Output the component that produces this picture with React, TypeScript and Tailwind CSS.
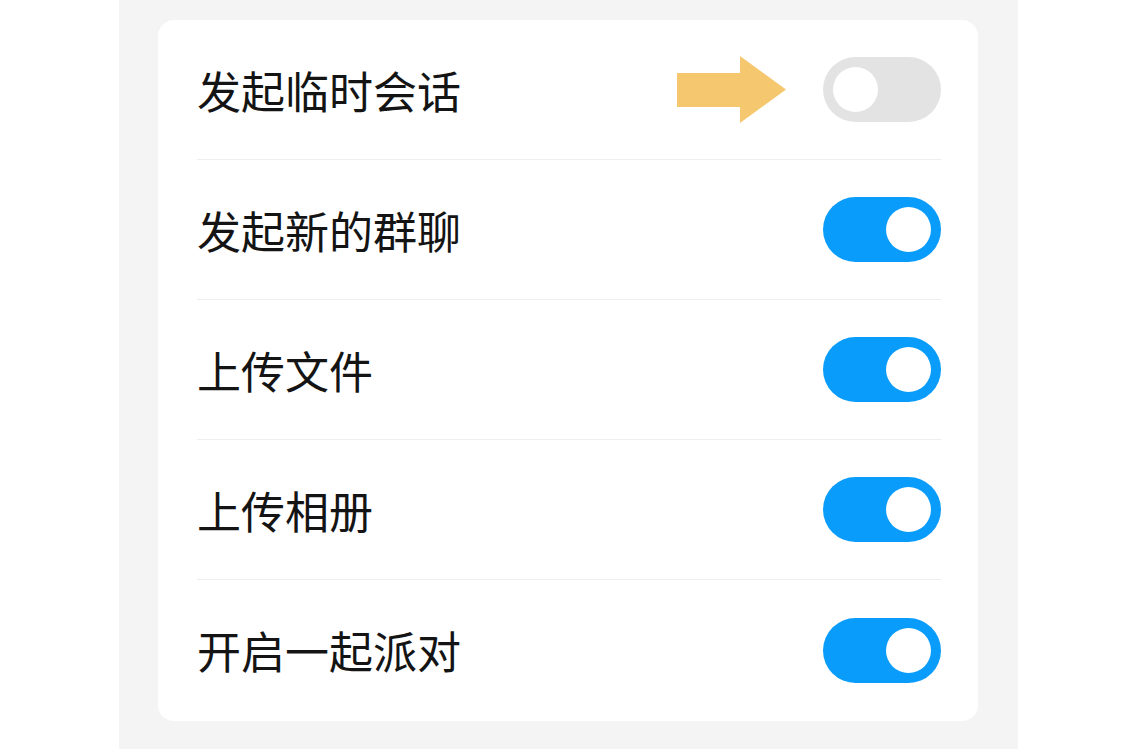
import { useState } from "react";

const ITEMS = [
  { label: "发起临时会话", on: false, arrow: true },
  { label: "发起新的群聊", on: true },
  { label: "上传文件", on: true },
  { label: "上传相册", on: true },
  { label: "开启一起派对", on: true },
];

function Toggle({ on, onClick }: { on: boolean; onClick: () => void }) {
  return (
    <button
      onClick={onClick}
      className={`w-[118px] h-[65px] rounded-full flex items-center px-[10px] ${
        on ? "bg-[#0a9cfa] justify-end" : "bg-[#e3e3e3] justify-start"
      }`}
    >
      <span className="w-[45px] h-[45px] rounded-full bg-white block" />
    </button>
  );
}

function Arrow() {
  return (
    <svg width="110" height="67" viewBox="0 0 110 67" className="mr-[36px]">
      <polygon points="0,17 63,17 63,0 109,33.5 63,67 63,51 0,51" fill="#f5c86f" />
    </svg>
  );
}

export default function App() {
  const [items, setItems] = useState(ITEMS);

  const flip = (i: number) =>
    setItems(items.map((it, j) => (j === i ? { ...it, on: !it.on } : it)));

  return (
    <div className="w-full h-screen bg-white overflow-hidden">
      <div className="ml-[119px] w-[899px] h-full bg-[#f4f4f4] pl-[39px] pr-[40px] pt-[20px]">
        <div className="bg-white rounded-[16px] pl-[39px] pr-[37px] pb-[1px]">
          {items.map((it, i) => (
            <div
              key={it.label}
              className={`h-[140px] flex items-center ${
                i < items.length - 1 ? "border-b border-[#eeeeee]" : "h-[139px]"
              }`}
            >
              <span
                className="flex-1 text-[44px] leading-none text-[#141414]"
                style={{ fontFamily: '"Noto Sans CJK SC", "Noto Sans", sans-serif' }}
              >
                {it.label}
              </span>
              {it.arrow && <Arrow />}
              <Toggle on={it.on} onClick={() => flip(i)} />
            </div>
          ))}
        </div>
      </div>
    </div>
  );
}
